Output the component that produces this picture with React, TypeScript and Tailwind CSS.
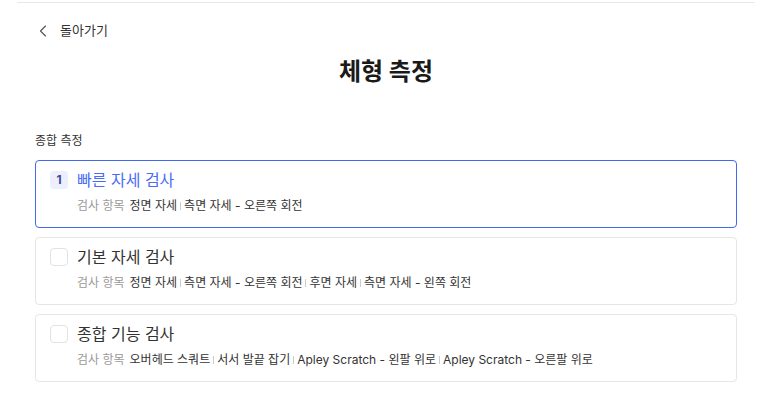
import { ChevronLeft } from 'lucide-react';

type Test = {
  title: string;
  items: string[];
  active?: boolean;
};

const tests: Test[] = [
  {
    title: '빠른 자세 검사',
    items: ['정면 자세', '측면 자세 - 오른쪽 회전'],
    active: true,
  },
  {
    title: '기본 자세 검사',
    items: ['정면 자세', '측면 자세 - 오른쪽 회전', '후면 자세', '측면 자세 - 왼쪽 회전'],
  },
  {
    title: '종합 기능 검사',
    items: ['오버헤드 스쿼트', '서서 발끝 잡기', 'Apley Scratch - 왼팔 위로', 'Apley Scratch - 오른팔 위로'],
  },
];

function TestCard({ test, index }: { test: Test; index: number }) {
  return (
    <div
      className={
        test.active
          ? 'rounded-[4px] border border-[#4169f0] bg-white px-[14px] pt-[9px] pb-[13px]'
          : 'rounded-[4px] border border-[#e6e6e6] bg-white px-[14px] pt-[9px] pb-[13px]'
      }
    >
      <div className="flex h-[20px] items-center gap-[9px]">
        {test.active ? (
          <div className="flex size-[18px] items-center justify-center rounded-[4px] bg-[#edf0fc] text-[12px] font-bold text-[#3b4a9c]">
            {index + 1}
          </div>
        ) : (
          <div className="size-[18px] rounded-[4px] border border-[#e2e2e2] bg-white" />
        )}
        <span
          className={
            test.active
              ? 'text-[16px] leading-[20px] text-[#4a6cf5]'
              : 'text-[16px] leading-[20px] text-[#333333]'
          }
        >
          {test.title}
        </span>
      </div>
      <div className="mt-[8px] flex h-[16px] items-center pl-[27px] text-[12px] leading-[16px]">
        <span className="mr-[5px] text-[#9a9a9a]">검사 항목</span>
        {test.items.map((item, i) => (
          <span key={item} className="flex items-center text-[#333333]">
            {i > 0 && <span className="mx-[3px] h-[8px] w-px bg-[#cccccc]" />}
            {item}
          </span>
        ))}
      </div>
    </div>
  );
}

export default function App() {
  return (
    <div className="min-h-screen bg-white font-['Inter','Noto_Sans_CJK_KR',sans-serif]">
      <div className="ml-[17px] mt-[2px] w-[738px] border-t border-[#e8e8e8] px-[18px]">
        <div className="mt-[18px] flex h-[20px] items-center gap-[7px] -ml-[2px]">
          <ChevronLeft className="size-[20px] text-[#555555]" strokeWidth={1.4} />
          <span className="text-[13px] text-[#333333]">돌아가기</span>
        </div>

        <h1 className="mt-[15px] text-center text-[24px] leading-[32px] font-bold text-[#1a1a1a]">
          체형 측정
        </h1>

        <div className="mt-[45px] text-[12px] leading-[16px] text-[#333333]">종합 측정</div>

        <div className="mt-[11px] flex flex-col gap-[9px]">
          {tests.map((test, i) => (
            <TestCard key={test.title} test={test} index={i} />
          ))}
        </div>
      </div>
    </div>
  );
}
